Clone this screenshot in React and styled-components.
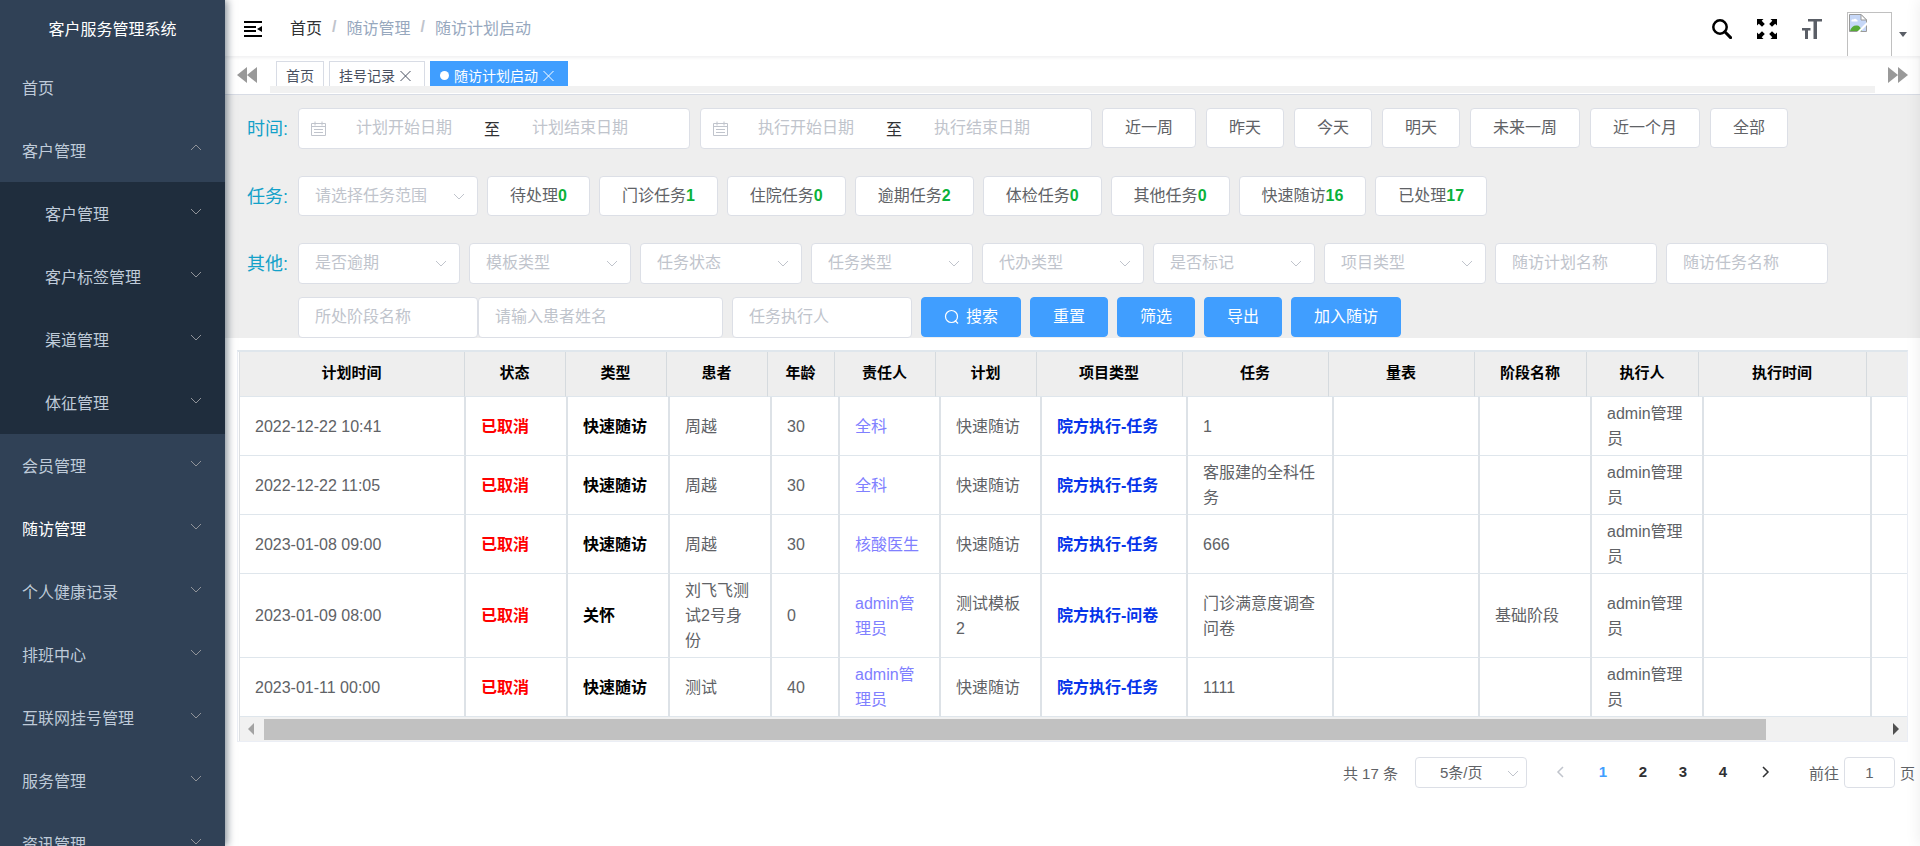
import React, { useState } from "react";
import styled, { createGlobalStyle } from "styled-components";

const menu = [
  { title: "首页", plain: true },
  {
    title: "客户管理",
    open: true,
    children: ["客户管理", "客户标签管理", "渠道管理", "体征管理"],
  },
  { title: "会员管理" },
  { title: "随访管理", active: true },
  { title: "个人健康记录" },
  { title: "排班中心" },
  { title: "互联网挂号管理" },
  { title: "服务管理" },
  { title: "资讯管理" },
];

const ranges = ["近一周", "昨天", "今天", "明天", "未来一周", "近一个月", "全部"];

const tasks = [
  ["待处理", 0],
  ["门诊任务", 1],
  ["住院任务", 0],
  ["逾期任务", 2],
  ["体检任务", 0],
  ["其他任务", 0],
  ["快速随访", 16],
  ["已处理", 17],
];

const filters = [
  "是否逾期",
  "模板类型",
  "任务状态",
  "任务类型",
  "代办类型",
  "是否标记",
  "项目类型",
];

const columns = [
  { title: "计划时间", head: 225, body: 226 },
  { title: "状态", head: 101, body: 102, color: "#ff0000", bold: true },
  { title: "类型", head: 101, body: 102, color: "#000000", bold: true },
  { title: "患者", head: 101, body: 102 },
  { title: "年龄", head: 67, body: 68 },
  { title: "责任人", head: 101, body: 101, color: "#8080ff" },
  { title: "计划", head: 101, body: 101 },
  { title: "项目类型", head: 146, body: 146, color: "#0433ea", bold: true },
  { title: "任务", head: 146, body: 146 },
  { title: "量表", head: 146, body: 146 },
  { title: "阶段名称", head: 112, body: 112 },
  { title: "执行人", head: 112, body: 112 },
  { title: "执行时间", head: 168, body: 168 },
  { title: "", head: 185, body: 180 },
];

const rows = [
  ["2022-12-22 10:41", "已取消", "快速随访", "周越", "30", "全科", "快速随访", "院方执行-任务", "1", "", "", "admin管理员", "", ""],
  ["2022-12-22 11:05", "已取消", "快速随访", "周越", "30", "全科", "快速随访", "院方执行-任务", "客服建的全科任务", "", "", "admin管理员", "", ""],
  ["2023-01-08 09:00", "已取消", "快速随访", "周越", "30", "核酸医生", "快速随访", "院方执行-任务", "666", "", "", "admin管理员", "", ""],
  ["2023-01-09 08:00", "已取消", "关怀", "刘飞飞测试2号身份", "0", "admin管理员", "测试模板2", "院方执行-问卷", "门诊满意度调查问卷", "", "基础阶段", "admin管理员", "", ""],
  ["2023-01-11 00:00", "已取消", "快速随访", "测试", "40", "admin管理员", "快速随访", "院方执行-任务", "1111", "", "", "admin管理员", "", ""],
];

const sum = (key) => columns.reduce((total, col) => total + col[key], 0);

const Chevron = ({ up }) => (
  <svg width="12" height="12" viewBox="0 0 12 12" fill="none" stroke="currentColor">
    <path d={up ? "M1 8l5-5 5 5" : "M1 4l5 5 5-5"} />
  </svg>
);

const FoldIcon = () => (
  <svg width="18" height="16" viewBox="0 0 18 16">
    <path d="M0 0h18v2H0zM0 5h12v2H0zM0 9h12v2H0zM0 14h18v2H0zM18 5v6l-5-3z" />
  </svg>
);

const SearchIcon = () => (
  <svg width="20" height="20" viewBox="0 0 20 20" fill="none" stroke="#000">
    <circle cx="8" cy="8" r="6.7" strokeWidth="2.5" />
    <path d="M12.8 12.8l5.8 5.8" strokeWidth="3" strokeLinecap="round" />
  </svg>
);

const FullscreenIcon = () => (
  <svg width="20" height="20" viewBox="0 0 20 20">
    <path d="M0 0h6.5L4.7 1.8 7.8 5 5 7.8 1.8 4.7 0 6.500z" />
    <path d="M20 0v6.5l-1.800-1.800L15 7.800 12.200 5l3.100-3.200L13.500 0z" />
    <path d="M0 20v-6.500l1.800 1.800L5 12.200 7.800 15l-3.100 3.200L6.500 20z" />
    <path d="M20 20h-6.500l1.800-1.800-3.100-3.200 2.800-2.800 3.200 3.100 1.800-1.800z" />
  </svg>
);

const SizeIcon = () => (
  <svg width="20" height="20" viewBox="0 0 20 20" fill="#5a5e66">
    <path d="M6 0h14v2.500h-5V20h-3.500V2.500H6zM0 9h8.500v2.500H6V20H3v-8.500H0z" />
  </svg>
);

const PictureIcon = () => (
  <svg width="18" height="18" viewBox="0 0 18 18">
    <path d="M.5.5H12L17.500 6v11.500H.5z" fill="#c6d7f7" stroke="#9a9a9a" />
    <path d="M12 .5V6h5.500z" fill="#fff" stroke="#9a9a9a" />
    <path d="M2.500 7.500a1.500 1.500 0 0 1 2-2 2 2 0 0 1 3.500.5 1 1 0 0 1 .5 1.500z" fill="#fff" />
    <path d="M1 17c1-4 4-6 7-5.500 2 0 4 2 5 5.500z" fill="#57ab36" />
    <path d="M8 18L18 8v3l-7 7z" fill="#fff" />
  </svg>
);

const FastIcon = ({ forward }) => (
  <svg width="20" height="16" viewBox="0 0 20 16" fill="#999">
    <path d={forward ? "M0 0l10 8-10 8zM10 0l10 8-10 8z" : "M10 0v16L0 8zM20 0v16L10 8z"} />
  </svg>
);

const CloseIcon = () => (
  <svg width="11" height="12" viewBox="0 0 11 12" fill="none" stroke="currentColor">
    <path d="M.5 1l10 10M10.500 1l-10 10" />
  </svg>
);

const CalendarIcon = () => (
  <svg width="15" height="15" viewBox="0 0 15 15" fill="none" stroke="#c0c4cc">
    <path d="M.5 2.500h14v12H.5zM.5 5.500h14M4 .5v4M11 .5v4M3 8.500h9M3 11.500h9" />
  </svg>
);

const LensIcon = () => (
  <svg width="16" height="16" viewBox="0 0 16 16" fill="none" stroke="#fff">
    <circle cx="7.500" cy="7.500" r="6" strokeWidth="1.200" />
    <path d="M11 11.500l3 3" strokeWidth="1.200" />
  </svg>
);

const SelectField = ({ label, width }) => (
  <SelectBox $width={width}>
    <Select aria-label={label} defaultValue="">
      <option value="">{label}</option>
    </Select>
    <Chevron />
  </SelectBox>
);

const DateRange = ({ start, end }) => (
  <DateBox>
    <CalendarIcon />
    <DateInput placeholder={start} aria-label={start} />
    <span>至</span>
    <DateInput placeholder={end} aria-label={end} />
  </DateBox>
);

const Sidebar = () => (
  <StyledSidebar>
    <Title>客户服务管理系统</Title>
    {menu.map((item) => (
      <React.Fragment key={item.title}>
        <MenuItem href="#" $active={item.active}>
          {item.title}
          {!item.plain && <Chevron up={item.open} />}
        </MenuItem>
        {item.children && (
          <SubMenu>
            {item.children.map((child) => (
              <MenuItem href="#" $nested key={child}>
                {child}
                <Chevron />
              </MenuItem>
            ))}
          </SubMenu>
        )}
      </React.Fragment>
    ))}
  </StyledSidebar>
);

const Navbar = () => (
  <StyledNavbar>
    <IconButton aria-label="折叠菜单">
      <FoldIcon />
    </IconButton>
    <Breadcrumb>
      <Crumb href="#" $root>
        首页
      </Crumb>
      <b>/</b>
      <Crumb href="#">随访管理</Crumb>
      <b>/</b>
      <Crumb href="#">随访计划启动</Crumb>
    </Breadcrumb>
    <Tools>
      <IconButton aria-label="搜索">
        <SearchIcon />
      </IconButton>
      <IconButton aria-label="全屏">
        <FullscreenIcon />
      </IconButton>
      <IconButton aria-label="字号">
        <SizeIcon />
      </IconButton>
      <Account aria-label="用户">
        <Avatar>
          <PictureIcon />
        </Avatar>
        <Caret />
      </Account>
    </Tools>
  </StyledNavbar>
);

const TagsView = () => (
  <StyledTagsView>
    <IconButton aria-label="向左">
      <FastIcon />
    </IconButton>
    <TagScroll>
      <TagList>
        <Tag href="#">首页</Tag>
        <Tag href="#">
          挂号记录
          <CloseIcon />
        </Tag>
        <Tag href="#" $active>
          随访计划启动
          <CloseIcon />
        </Tag>
      </TagList>
      <TagTrack />
    </TagScroll>
    <IconButton aria-label="向右">
      <FastIcon forward />
    </IconButton>
  </StyledTagsView>
);

const Filters = () => (
  <FilterPanel>
    <FilterRow>
      <RowLabel>时间:</RowLabel>
      <Fields $gap={10}>
        <DateRange start="计划开始日期" end="计划结束日期" />
        <DateRange start="执行开始日期" end="执行结束日期" />
        {ranges.map((name) => (
          <Button key={name}>{name}</Button>
        ))}
      </Fields>
    </FilterRow>
    <FilterRow>
      <RowLabel>任务:</RowLabel>
      <Fields $gap={9}>
        <SelectField label="请选择任务范围" width={180} />
        {tasks.map(([name, count]) => (
          <Button key={name}>
            {name}
            <Count>{count}</Count>
          </Button>
        ))}
      </Fields>
    </FilterRow>
    <FilterRow $tight>
      <RowLabel>其他:</RowLabel>
      <Fields $gap={9}>
        {filters.map((name) => (
          <SelectField key={name} label={name} width={162} />
        ))}
        <Input $width={162} placeholder="随访计划名称" aria-label="随访计划名称" />
        <Input $width={162} placeholder="随访任务名称" aria-label="随访任务名称" />
      </Fields>
    </FilterRow>
    <FilterRow>
      <RowLabel />
      <Fields $gap={9}>
        <Joined>
          <Input $width={180} placeholder="所处阶段名称" aria-label="所处阶段名称" />
          <Input $width={245} placeholder="请输入患者姓名" aria-label="请输入患者姓名" />
        </Joined>
        <Input $width={180} placeholder="任务执行人" aria-label="任务执行人" />
        <Button $primary>
          <LensIcon />
          搜索
        </Button>
        <Button $primary>重置</Button>
        <Button $primary>筛选</Button>
        <Button $primary>导出</Button>
        <Button $primary>加入随访</Button>
      </Fields>
    </FilterRow>
  </FilterPanel>
);

const Cols = ({ name }) => (
  <colgroup>
    {columns.map((col, i) => (
      <col key={i} style={{ width: col[name] }} />
    ))}
  </colgroup>
);

const PlanTable = () => (
  <TableFrame>
    <TableInner>
      <Table style={{ width: sum("head") }}>
        <Cols name="head" />
        <thead>
          <tr>
            {columns.map((col, i) => (
              <Th key={i}>{col.title}</Th>
            ))}
          </tr>
        </thead>
      </Table>
      <Table style={{ width: sum("body") }}>
        <Cols name="body" />
        <tbody>
          {rows.map((row) => (
            <tr key={row[0]}>
              {row.map((cell, i) => (
                <Td key={i} $color={columns[i].color} $bold={columns[i].bold}>
                  {cell}
                </Td>
              ))}
            </tr>
          ))}
        </tbody>
      </Table>
      <ScrollBar>
        <Arrow $left />
        <Thumb />
        <Arrow />
      </ScrollBar>
    </TableInner>
  </TableFrame>
);

const Pagination = () => {
  const [page, setPage] = useState(1);
  return (
    <StyledPagination>
      <span>共 17 条</span>
      <PageSize>
        <select aria-label="每页条数">
          <option>5条/页</option>
        </select>
        <Chevron />
      </PageSize>
      <PageArrow aria-label="上一页" disabled={page === 1} onClick={() => setPage(page - 1)}>
        <svg width="8" height="12" viewBox="0 0 8 12" fill="none" stroke="currentColor" strokeWidth="1.5">
          <path d="M7 1L2 6l5 5" />
        </svg>
      </PageArrow>
      {[1, 2, 3, 4].map((n) => (
        <PageButton key={n} $active={n === page} onClick={() => setPage(n)}>
          {n}
        </PageButton>
      ))}
      <PageArrow aria-label="下一页" disabled={page === 4} onClick={() => setPage(page + 1)}>
        <svg width="8" height="12" viewBox="0 0 8 12" fill="none" stroke="currentColor" strokeWidth="1.5">
          <path d="M1 1l5 5-5 5" />
        </svg>
      </PageArrow>
      <Jump>
        前往
        <input value={page} onChange={(e) => setPage(Number(e.target.value) || 1)} />
        页
      </Jump>
    </StyledPagination>
  );
};

export default function App() {
  return (
    <Layout>
      <GlobalStyle />
      <Sidebar />
      <Main>
        <Navbar />
        <TagsView />
        <Filters />
        <PlanTable />
        <Pagination />
      </Main>
      <RightPanel />
    </Layout>
  );
}

const GlobalStyle = createGlobalStyle`
  * {
    box-sizing: border-box;
  }
  body {
    margin: 0;
    background-color: #fff;
  }
  body, button, input, select {
    font-family: "Liberation Sans", "Noto Sans CJK SC", sans-serif;
    font-size: 16px;
  }
  a {
    text-decoration: none;
  }
  svg {
    flex-shrink: 0;
  }
`;
const Layout = styled.div`
  display: flex;
  height: 100vh;
  overflow: hidden;
`;
const StyledSidebar = styled.nav`
  width: 225px;
  flex-shrink: 0;
  overflow: hidden;
  background-color: #304156;
  box-shadow: 2px 0 8px rgba(0, 21, 41, 0.5);
  z-index: 2;
`;
const Title = styled.div`
  height: 56px;
  padding-top: 2px;
  line-height: 56px;
  text-align: center;
  color: #fff;
`;
const MenuItem = styled.a`
  display: flex;
  align-items: center;
  justify-content: space-between;
  height: 63px;
  padding: 0 23px 2px ${({ $nested }) => ($nested ? "45px" : "22px")};
  color: ${({ $active }) => ($active ? "#ffffff" : "#bfcbd9")};
  svg {
    color: #909399;
    margin-bottom: 3px;
  }
`;
const SubMenu = styled.div`
  background-color: #1f2d3d;
`;
const Main = styled.main`
  flex: 1;
  min-width: 0;
`;
const RightPanel = styled.aside`
  position: fixed;
  top: 0;
  left: 100%;
  width: 260px;
  height: 100vh;
  box-shadow: 0 0 15px rgba(0, 0, 0, 0.08);
  z-index: 3;
`;
const IconButton = styled.button`
  display: flex;
  padding: 0;
  border: none;
  background: none;
  cursor: pointer;
`;
const StyledNavbar = styled.header`
  display: flex;
  align-items: center;
  height: 56px;
  padding: 2px 13px 0 19px;
  overflow: hidden;
`;
const Breadcrumb = styled.div`
  display: flex;
  align-items: center;
  gap: 10px;
  margin: 0 auto 4px 28px;
  b {
    color: #c0c4cc;
  }
`;
const Crumb = styled.a`
  color: ${({ $root }) => ($root ? "#303133" : "#97a8be")};
`;
const Tools = styled.div`
  display: flex;
  align-items: center;
  gap: 25px;
`;
const Account = styled.button`
  display: flex;
  align-items: center;
  gap: 7px;
  height: 34px;
  padding: 0;
  border: none;
  background: none;
`;
const Avatar = styled.span`
  display: flex;
  align-self: flex-start;
  width: 45px;
  height: 48px;
  padding: 1px;
  border: 1px solid #c0c0c0;
`;
const Caret = styled.span`
  margin-top: 10px;
  border: 4px solid transparent;
  border-top: 5px solid #5a5e66;
  border-bottom: none;
`;
const StyledTagsView = styled.div`
  display: flex;
  align-items: center;
  gap: 13px;
  height: 39px;
  padding: 0 12px;
  border-bottom: 1px solid #d8dce5;
  box-shadow: inset 0 2px 3px rgba(0, 21, 41, 0.06);
`;
const TagScroll = styled.div`
  flex: 1;
  min-width: 0;
  align-self: flex-start;
`;
const TagList = styled.div`
  display: flex;
  gap: 5px;
  height: 30px;
  padding: 5px 6px 0;
  overflow: hidden;
`;
const TagTrack = styled.div`
  height: 7px;
  background-color: #f1f1f1;
`;
const Tag = styled.a`
  display: flex;
  align-items: center;
  height: 30px;
  flex-shrink: 0;
  padding: 0 9px 2px;
  border: 1px solid ${({ $active }) => ($active ? "#409eff" : "#d8dce5")};
  background-color: ${({ $active }) => ($active ? "#409eff" : "#ffffff")};
  color: ${({ $active }) => ($active ? "#ffffff" : "#495060")};
  font-size: 14px;
  &::before {
    content: "";
    display: ${({ $active }) => ($active ? "block" : "none")};
    width: 9px;
    height: 9px;
    margin-right: 5px;
    border-radius: 50%;
    background-color: #fff;
  }
  svg {
    margin: 2px 4px 0 5px;
  }
`;
const FilterPanel = styled.section`
  padding: 13px 0 0 22px;
  background-color: #eee;
`;
const FilterRow = styled.div`
  display: flex;
  align-items: flex-start;
  padding-bottom: ${({ $tight }) => ($tight ? "13px" : "27px")};
  &:last-child {
    padding-bottom: 0;
  }
  select {
    height: ${({ $tight }) => ($tight ? "41px" : "40px")};
  }
`;
const Fields = styled.div`
  display: flex;
  align-items: flex-start;
  gap: ${({ $gap }) => $gap}px;
`;
const RowLabel = styled.span`
  width: 51px;
  line-height: 42px;
  max-height: 40px;
  font-size: 18px;
  color: #13a1c9;
  flex-shrink: 0;
`;
const Joined = styled.div`
  display: flex;
`;
const Input = styled.input`
  width: ${({ $width }) => $width}px;
  height: 41px;
  padding: 0 16px 1px;
  border: 1px solid #dcdfe6;
  border-radius: 4px;
  background-color: #fff;
  color: #606266;
  &::placeholder {
    color: #c0c4cc;
  }
`;
const SelectBox = styled.div`
  position: relative;
  width: ${({ $width }) => $width}px;
  svg {
    position: absolute;
    top: 14px;
    right: 13px;
    color: #c0c4cc;
    pointer-events: none;
  }
`;
const Select = styled.select`
  display: block;
  width: 100%;
  padding: 0 30px 2px 16px;
  border: 1px solid #dcdfe6;
  border-radius: 4px;
  appearance: none;
  background-color: #fff;
  color: #c0c4cc;
`;
const DateBox = styled.div`
  display: flex;
  align-items: center;
  width: 392px;
  height: 41px;
  padding-left: 12px;
  border: 1px solid #dcdfe6;
  border-radius: 4px;
  background-color: #fff;
  color: #303133;
  span {
    width: 20px;
    padding-bottom: 2px;
    text-align: center;
  }
`;
const DateInput = styled.input`
  width: 156px;
  padding: 0 0 1px;
  border: none;
  outline: none;
  text-align: center;
  &::placeholder {
    color: #c0c4cc;
  }
`;
const Button = styled.button`
  display: flex;
  align-items: baseline;
  height: 40px;
  padding: 0 22px;
  border: 1px solid ${({ $primary }) => ($primary ? "#409eff" : "#dcdfe6")};
  border-radius: 4px;
  background-color: ${({ $primary }) => ($primary ? "#409eff" : "#ffffff")};
  color: ${({ $primary }) => ($primary ? "#ffffff" : "#606266")};
  line-height: 38px;
  white-space: nowrap;
  cursor: pointer;
  svg {
    align-self: center;
    margin-right: 6px;
  }
`;
const Count = styled.b`
  color: #0ab23a;
`;
const TableFrame = styled.section`
  margin: 12px 12px 0;
  padding-left: 1px;
  border: 1px solid #ebeef5;
  border-top: 2px solid #dfe6ec;
`;
const TableInner = styled.div`
  overflow: hidden;
  border-left: 1px solid #dcdfe2;
`;
const Table = styled.table`
  table-layout: fixed;
  border-collapse: separate;
  border-spacing: 0;
`;
const Th = styled.th`
  height: 45px;
  padding: 0 1px 5px 0;
  border-right: 1px solid #d5dade;
  border-bottom: 1px solid #dfe6ec;
  background-color: #eee;
  color: #000;
  font-size: 15px;
`;
const Td = styled.td`
  padding: 4px 15px;
  border-right: 2px solid #dde2e7;
  border-bottom: 1px solid #dfe6ec;
  color: ${({ $color }) => $color || "#606266"};
  font-weight: ${({ $bold }) => ($bold ? "bold" : "normal")};
  line-height: 25px;
  word-break: break-all;
`;
const ScrollBar = styled.div`
  display: flex;
  align-items: center;
  justify-content: space-between;
  height: 24px;
  padding: 0 8px;
  background-color: #f1f1f1;
`;
const Arrow = styled.span`
  border: 6px solid transparent;
  border-left: ${({ $left }) => ($left ? "none" : "6px solid #505050")};
  border-right: ${({ $left }) => ($left ? "6px solid #a3a3a3" : "none")};
`;
const Thumb = styled.div`
  width: 91%;
  height: 21px;
  margin: 0 auto 0 10px;
  background-color: #c1c1c1;
`;
const StyledPagination = styled.div`
  display: flex;
  align-items: center;
  justify-content: flex-end;
  height: 31px;
  margin-top: 15px;
  padding-right: 5px;
  color: #606266;
  font-size: 15px;
`;
const PageSize = styled.div`
  position: relative;
  margin: 0 10px 0 17px;
  select {
    display: block;
    width: 112px;
    height: 31px;
    padding: 0 24px 1px;
    border: 1px solid #dcdfe6;
    border-radius: 4px;
    appearance: none;
    background-color: #fff;
    color: #606266;
    font-size: 15px;
  }
  svg {
    position: absolute;
    top: 10px;
    right: 8px;
    color: #c0c4cc;
    pointer-events: none;
  }
`;
const PageArrow = styled.button`
  width: 46px;
  padding: 0;
  border: none;
  background: none;
  color: #303133;
  &:disabled {
    color: #c0c4cc;
  }
`;
const PageButton = styled.button`
  width: 40px;
  padding: 0 0 2px;
  border: none;
  background: none;
  color: ${({ $active }) => ($active ? "#409eff" : "#303133")};
  font-size: 15px;
  font-weight: bold;
`;
const Jump = styled.label`
  display: flex;
  align-items: center;
  gap: 5px;
  margin-left: 20px;
  input {
    width: 51px;
    height: 31px;
    padding: 0;
    border: 1px solid #dcdfe6;
    border-radius: 4px;
    color: #606266;
    font-size: 15px;
    text-align: center;
  }
`;
